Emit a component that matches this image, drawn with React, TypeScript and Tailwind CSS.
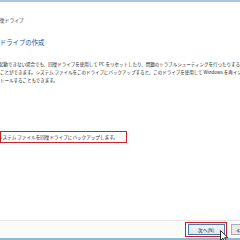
export default function App() {
  const font = { fontFamily: '"Noto Sans CJK JP", "Noto Sans", sans-serif' };

  return (
    <div
      className="relative w-[240px] h-[240px] overflow-hidden bg-white flex flex-col border-t-[2px] border-[#a9c7e1]"
      style={font}
    >
      {/* Window title */}
      <div className="pt-[15px] ml-[-5px] text-[4.8px] leading-[6px] text-[#333] whitespace-nowrap">
        回復ドライブ
      </div>

      {/* Heading */}
      <div className="mt-[16px] ml-[-13px] text-[6.4px] leading-[8px] text-[#2a4ea3] whitespace-nowrap">
        回復ドライブの作成
      </div>

      {/* Description */}
      <div className="mt-[13px] text-[4.5px] leading-[8px] text-[#222] whitespace-nowrap">
        <div className="ml-[-1px]">起動できない場合でも、回復ドライブを使用して PC をリセットしたり、問題のトラブルシューティングを行ったりする</div>
        <div>ことができます。システム ファイルをこのドライブにバックアップすると、このドライブを使用して Windows を再インストール</div>
        <div>トールすることもできます。</div>
      </div>

      {/* Checkbox label, highlighted */}
      <div className="mt-[47px] self-start h-[12px] pr-[8px] border border-[#d4202c] flex items-center">
        <div className="ml-[-3px] shrink-0 text-[4.6px] leading-[8px] text-[#222] whitespace-nowrap">
          システム ファイルを回復ドライブにバックアップします。
        </div>
      </div>

      <div className="flex-1" />

      {/* Footer */}
      <div className="h-[20px] border-t border-[#e4e4e4] border-b-[2px] border-b-[#8fbad3] bg-[#fbfbfb] flex items-start pt-[1px]">
        <div className="ml-[185px] h-[15px] w-[42px] shrink-0 border-[1.5px] border-[#d31f2b] flex items-center justify-center">
          <div className="h-[11px] w-[37px] border border-[#3d7fb5] bg-gradient-to-b from-[#f3f6f9] to-[#e1e6eb] flex items-center justify-center text-[4.8px] leading-[6px] text-[#222] whitespace-nowrap">
            次へ(N)
          </div>
        </div>
        <div className="ml-[4px] mt-[2px] h-[11px] w-[40px] shrink-0 border border-[#adadad] bg-[#e9e9e9] flex items-center pl-[4px] text-[4.8px] leading-[6px] text-[#222] whitespace-nowrap">
          キャンセル
        </div>
      </div>

      {/* Mouse pointer */}
      <svg className="absolute left-[220px] top-[228px]" width="9" height="13" viewBox="0 0 9 13">
        <path d="M0.5 0.5 L0.5 10.5 L3 8.2 L4.8 12.2 L6.3 11.5 L4.6 7.7 L8 7.7 Z" fill="#fff" stroke="#000" strokeWidth="0.8" strokeLinejoin="round" />
      </svg>
    </div>
  );
}
